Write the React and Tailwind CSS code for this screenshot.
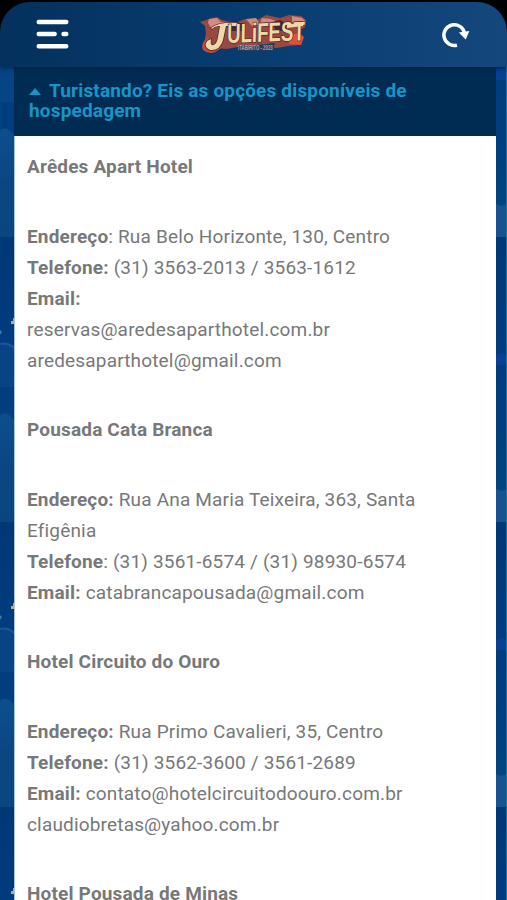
const hotels = [
  {
    name: 'Arêdes Apart Hotel',
    lines: [
      ['Endereço', ': Rua Belo Horizonte, 130, Centro'],
      ['Telefone:', ' (31) 3563-2013 / 3563-1612'],
      ['Email:', ''],
      ['', 'reservas@aredesaparthotel.com.br'],
      ['', 'aredesaparthotel@gmail.com'],
    ],
  },
  {
    name: 'Pousada Cata Branca',
    lines: [
      ['Endereço:', ' Rua Ana Maria Teixeira, 363, Santa'],
      ['', 'Efigênia'],
      ['Telefone', ': (31) 3561-6574 / (31) 98930-6574'],
      ['Email:', ' catabrancapousada@gmail.com'],
    ],
  },
  {
    name: 'Hotel Circuito do Ouro',
    lines: [
      ['Endereço:', ' Rua Primo Cavalieri, 35, Centro'],
      ['Telefone:', ' (31) 3562-3600 / 3561-2689'],
      ['Email:', ' contato@hotelcircuitodoouro.com.br'],
      ['', 'claudiobretas@yahoo.com.br'],
    ],
  },
  { name: 'Hotel Pousada de Minas', lines: [] },
];

function Backdrop() {
  return (
    <svg className="absolute inset-0" width="507" height="900">
      <defs>
        <linearGradient id="sea" x1="0" y1="0" x2="0" y2="1">
          <stop offset="0" stopColor="#003876" />
          <stop offset="0.4" stopColor="#003c80" />
          <stop offset="0.8" stopColor="#00417f" />
          <stop offset="1" stopColor="#074887" />
        </linearGradient>
        <linearGradient id="cloud" x1="0" y1="0" x2="0" y2="1">
          <stop offset="0" stopColor="#0b4f8f" />
          <stop offset="0.5" stopColor="#0a4683" />
          <stop offset="1" stopColor="#074781" />
        </linearGradient>
        <pattern id="tile" width="507" height="285" y="237" patternUnits="userSpaceOnUse">
          <rect width="507" height="285" fill="url(#sea)" />
          <path d="M0 109Q7 104 14 110V150H0Z" fill="#0a4a8b" opacity=".6" />
          <path d="M0 178Q8 173 14 184V285H0Z" fill="url(#cloud)" />
          <path d="M0 107Q8 105 14 111" fill="none" stroke="#2867a0" strokeWidth="2" opacity=".6" />
          <path d="M0 93l2 2-2 3Z" fill="#347bae" />
          <path d="M11 87h3v-6h-1v3h-2Z" fill="#d5a562" />
          <path d="M496 252l5 2 6-2v33h-11Z" fill="#17548f" />
          <path d="M496 119q5-5 11-1v10h-11Z" fill="#0a3f98" />
        </pattern>
      </defs>
      <rect width="507" height="900" fill="url(#tile)" />
      <path d="M506.5 67V900" stroke="#286c9e" strokeWidth="1" />
    </svg>
  );
}

function Logo() {
  return (
    <svg className="absolute left-[200px] top-[10px]" width="110" height="48" viewBox="0 0 110 48">
      <path d="M9 9l8-2 5 3 13 3 10-4 12 1 9-5 14 3 9-3 12 1 5 4-1 7-6 4 2 9-3 5-10 1-11 2-14-1-12 1-14-1-10 2-11-1-7 1-5-6 2-9-1-8-5-4Z" fill="#9a4842" />
      <path d="M9 9l8-1 4 4 6 1-8 4-8 1-3-5Z" fill="#d98984" />
      <path d="M46 9l10-1 4 6-8 2ZM62 8l9 1 7 3-10 4-8-2ZM92 6l10 2 4 4-4 4-10-4Z" fill="#cf8c7d" />
      <path d="M30 13h14v8H30ZM72 12l8-2 7 4-2 7h-9Z" fill="#40292f" />
      <path d="M90 25l9-2 5 4-3 8-12-1Z" fill="#e0503f" />
      <path d="M8 27q-8 6-5 13 8 7 18-2l-2-5q-6 6-9 1Z" fill="#c4483f" />
      <g fill="#eed8a8" stroke="#48252b" strokeWidth="1.4" paintOrder="stroke" fontFamily="Liberation Sans, sans-serif" fontWeight="700">
        <path d="M11 18q7-6 27-5l-1 3H26l-3 14q-3 11-13 10-7-3-3-9l4-2q-1 7 2 6 4-1 5-8l2-11q-5 0-8 3Z" />
        <text transform="translate(27 33) rotate(-2) skewX(-3) scale(.69 1)" fontSize="27">ULiFEST</text>
        <path d="M87 15l17-3-1 4-16 2Z" stroke="none" />
      </g>
      <path d="M38 35q18 1 37-2l-2 7q-17 2-34 1Z" fill="#26395d" />
      <text transform="translate(38 40) scale(.62 1)" fontSize="7" fill="#bba2a5" fontFamily="Liberation Sans, sans-serif" fontWeight="700">ITABIRITO - 2023</text>
    </svg>
  );
}

export default function App() {
  return (
    <main className="relative h-[900px] w-[507px] overflow-hidden bg-black font-['Roboto',sans-serif]">
      <Backdrop />
      <div className="relative flex h-full flex-col">
        <div className="relative z-10 h-[67px] shrink-0 bg-black shadow-[0_1px_5px_rgba(0,20,45,0.65)]">
          <header className="relative top-[2px] flex h-[65px] items-start justify-between rounded-t-[30px] bg-linear-to-r from-[#04315d] via-[#083d70] to-[#14477c] pt-[17px] pr-[37px] pl-[36px]">
            <svg width="34" height="32" viewBox="0 0 34 32" fill="none" stroke="#fff" strokeWidth="4.4" strokeLinecap="round">
              <path d="M2.7 3H30.3M2.7 15H18.7M27.5 15h2.8M2.7 27.3H30.3" />
            </svg>
            <svg className="mt-[2px]" width="30" height="28" viewBox="0 0 30 28">
              <path d="M17 24.2A10.4 10.4 0 1 1 24.5 12" fill="none" stroke="#fff" strokeWidth="3.5" />
              <path d="M18.8 11.6L29.4 10 25.7 18.6Z" fill="#fff" />
            </svg>
          </header>
          <Logo />
        </div>
        <section className="ml-[14px] w-[482px] grow overflow-hidden bg-white">
          <h2 className="h-[69px] bg-[#002c54] pt-[14px] pl-[15px] text-[19px] leading-[20px] font-bold tracking-[0.17px] text-[#1795c9]">
            <div className="flex items-center whitespace-nowrap">
              <svg className="mr-[8px]" width="12" height="7" viewBox="0 0 12 7"><path d="M0 7L6 0 12 7Z" fill="currentColor" /></svg>
              <span>Turistando? Eis as opções disponíveis de</span>
            </div>
            <div>hospedagem</div>
          </h2>
          <div className="flex flex-col gap-[38px] border-l border-[#a8c3dd] pt-[15px] pl-[12px] text-[19px] leading-[31px] tracking-[0.17px] whitespace-pre text-[#77787a]">
            {hotels.map((hotel) => (
              <article key={hotel.name} className="flex flex-col gap-[39px]">
                <h3 className="font-bold">{hotel.name}</h3>
                {hotel.lines.length > 0 && (
                  <div>
                    {hotel.lines.map(([label, value]) => (
                      <p key={label + value}><b>{label}</b>{value}</p>
                    ))}
                  </div>
                )}
              </article>
            ))}
          </div>
        </section>
      </div>
    </main>
  );
}
